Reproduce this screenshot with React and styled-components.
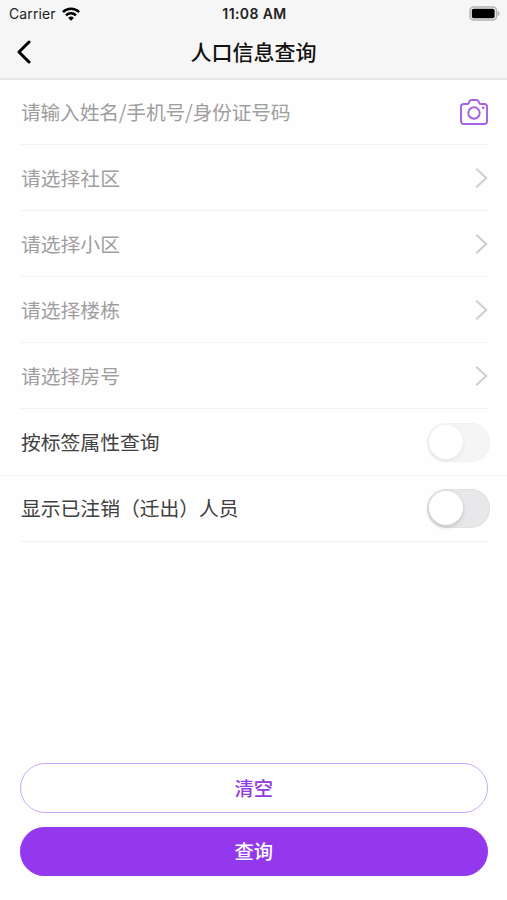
import React, { useState } from 'react';
import styled, { createGlobalStyle } from 'styled-components';

const GlobalStyle = createGlobalStyle`
  * {
    box-sizing: border-box;
  }
  body {
    margin: 0;
    background-color: #fefefe;
    font-family: Inter, 'Noto Sans CJK SC', sans-serif;
  }
`;

const Screen = styled.div`
  display: flex;
  flex-direction: column;
  width: 507px;
  height: 900px;
  overflow: hidden;
`;

const Header = styled.header`
  height: 80px;
  background-color: #f6f6f6;
  border-bottom: 2px solid #e6e6e6;
`;

const StatusBar = styled.div`
  display: grid;
  grid-template-columns: 1fr auto 1fr;
  align-items: center;
  height: 26px;
  padding: 0 7px 0 9px;
  color: #222;
  font-size: 14px;
  line-height: 27px;
`;

const Carrier = styled.div`
  display: flex;
  align-items: center;
  gap: 6px;
  letter-spacing: 0.1px;
`;

const Time = styled.div`
  font-size: 14px;
  font-weight: 600;
  letter-spacing: 0.4px;
`;

const Battery = styled.svg`
  justify-self: end;
`;

const NavBar = styled.div`
  display: grid;
  grid-template-columns: 48px 1fr 48px;
  align-items: center;
  height: 50px;
`;

const BackButton = styled.button`
  display: flex;
  padding: 1px 0 0 16px;
  border: 0;
  background: none;
`;

const Title = styled.h1`
  margin: 0;
  color: #111;
  font-family: 'Noto Sans CJK SC', sans-serif;
  font-size: 21px;
  font-weight: 500;
  line-height: 50px;
  text-align: center;
`;

const Form = styled.div`
  flex: 1;
  margin-top: -1px;
`;

const Row = styled.div`
  display: flex;
  align-items: center;
  justify-content: space-between;
  height: 66.1px;
  margin: ${({ $full }) => ($full ? '0' : '0 19px 0 20px')};
  padding: ${({ $full }) => ($full ? '0 17px 0 21px' : '0 0 0 1px')};
  border-bottom: 1.5px solid #f2f2f2;
`;

const Label = styled.span`
  color: ${({ $dark }) => ($dark ? '#404040' : '#9e9e9e')};
  font-family: 'Noto Sans CJK SC', sans-serif;
  font-size: 19.8px;
  letter-spacing: ${({ $tight }) => ($tight ? '-0.22px' : 'normal')};
  line-height: 30px;
  white-space: nowrap;
`;

const Switch = styled.button`
  display: flex;
  align-items: center;
  flex: none;
  width: 63px;
  height: 39px;
  margin-right: ${({ $inset }) => ($inset ? '-2px' : '0')};
  padding: 0 2px;
  border: 0;
  border-radius: 20px;
  background-color: ${({ $muted }) => ($muted ? '#f5f5f5' : '#e8e8ea')};
  box-shadow: inset 0 0 0 1px ${({ $muted }) => ($muted ? '#f1f1f1' : '#e1e1e2')};
`;

const Knob = styled.span`
  width: 34px;
  height: 34px;
  border-radius: 50%;
  background-color: #fff;
  box-shadow: 0 2px 4px rgba(0, 0, 0, ${({ $muted }) => ($muted ? 0.07 : 0.17)});
  transform: translateX(${({ $on }) => ($on ? '25px' : '0')});
`;

const Actions = styled.footer`
  display: flex;
  flex-direction: column;
  gap: 14px;
  padding: 0 19.5px 24.5px 20px;
`;

const Button = styled.button`
  height: ${({ $primary }) => ($primary ? '49px' : '50px')};
  padding: 0;
  border: ${({ $primary }) => ($primary ? '0' : '1.5px solid #cca6f3')};
  border-radius: 25px;
  background-color: ${({ $primary }) => ($primary ? '#9438ee' : '#fff')};
  color: ${({ $primary }) => ($primary ? '#fff' : '#923bdf')};
  font-family: 'Noto Sans CJK SC', sans-serif;
  font-size: 19.3px;
  font-weight: 500;
  line-height: 46px;
`;

const WifiIcon = () => (
  <svg width="18" height="14" viewBox="0 0 18 14" fill="none" stroke="#000" strokeWidth="2.5">
    <path d="M0.9 5.1a11.5 11.5 0 0 1 16.2 0" />
    <path d="M4 8.4a7.1 7.1 0 0 1 10 0" />
    <path d="M9 13.8 6.2 10.9a4 4 0 0 1 5.6 0Z" fill="#000" stroke="none" />
  </svg>
);

const BatteryIcon = () => (
  <Battery width="31" height="15" viewBox="0 0 31 15">
    <rect x="1" y="1" width="26.5" height="13" rx="3.8" fill="#f6f6f6" stroke="#b3b3b3" strokeWidth="1.5" />
    <rect x="2.8" y="2.8" width="22.8" height="9.4" rx="1.8" fill="#000" />
    <path d="M28.7 5v5c2.3-.7 2.3-4.3 0-5Z" fill="#aaa" />
  </Battery>
);

const BackIcon = () => (
  <svg width="16" height="24" viewBox="0 0 16 24" fill="none" stroke="#000" strokeWidth="3">
    <path d="m13 2-10 10 10 10" strokeLinecap="round" strokeLinejoin="round" />
  </svg>
);

const ChevronIcon = () => (
  <svg width="13" height="20" viewBox="0 0 13 20" fill="none" stroke="#cfcfcf" strokeWidth="2.1">
    <path d="m1.8 1.3 9.4 8.7-9.4 8.7" strokeLinecap="round" />
  </svg>
);

const CameraIcon = () => (
  <svg width="28" height="26" viewBox="0 0 28 26" fill="none" stroke="#a260e5" strokeWidth="1.9">
    <path
      d="M3.8 5h3.4q1 0 1.5-1l.6-1.3Q10.1 1 11.8 1h4.4q1.7 0 2.5 1.7l.6 1.3q.5 1 1.5 1h3.4Q27 5 27 7.8v14.4q0 2.8-2.8 2.8H3.8Q1 25 1 22.2V7.8Q1 5 3.8 5Z"
      strokeLinejoin="round"
    />
    <circle cx="14" cy="14" r="5.7" />
    <circle cx="23.2" cy="8.8" r="1.3" fill="#a260e5" stroke="none" />
  </svg>
);

const selects = ['请选择社区', '请选择小区', '请选择楼栋', '请选择房号'];

const Toggle = ({ muted, inset }) => {
  const [on, setOn] = useState(false);

  return (
    <Switch
      role="switch"
      aria-checked={on}
      $muted={muted}
      $inset={inset}
      onClick={() => setOn(!on)}
    >
      <Knob $on={on} $muted={muted} />
    </Switch>
  );
};

const App = () => (
  <>
    <GlobalStyle />
    <Screen>
      <Header>
        <StatusBar>
          <Carrier>
            Carrier
            <WifiIcon />
          </Carrier>
          <Time>11:08 AM</Time>
          <BatteryIcon />
        </StatusBar>
        <NavBar>
          <BackButton aria-label="返回">
            <BackIcon />
          </BackButton>
          <Title>人口信息查询</Title>
        </NavBar>
      </Header>
      <Form>
        <Row>
          <Label $tight>请输入姓名/手机号/身份证号码</Label>
          <CameraIcon />
        </Row>
        {selects.map((text) => (
          <Row key={text}>
            <Label>{text}</Label>
            <ChevronIcon />
          </Row>
        ))}
        <Row $full>
          <Label $dark>按标签属性查询</Label>
          <Toggle muted />
        </Row>
        <Row>
          <Label $dark>显示已注销（迁出）人员</Label>
          <Toggle inset />
        </Row>
      </Form>
      <Actions>
        <Button>清空</Button>
        <Button $primary>查询</Button>
      </Actions>
    </Screen>
  </>
);

export default App;
